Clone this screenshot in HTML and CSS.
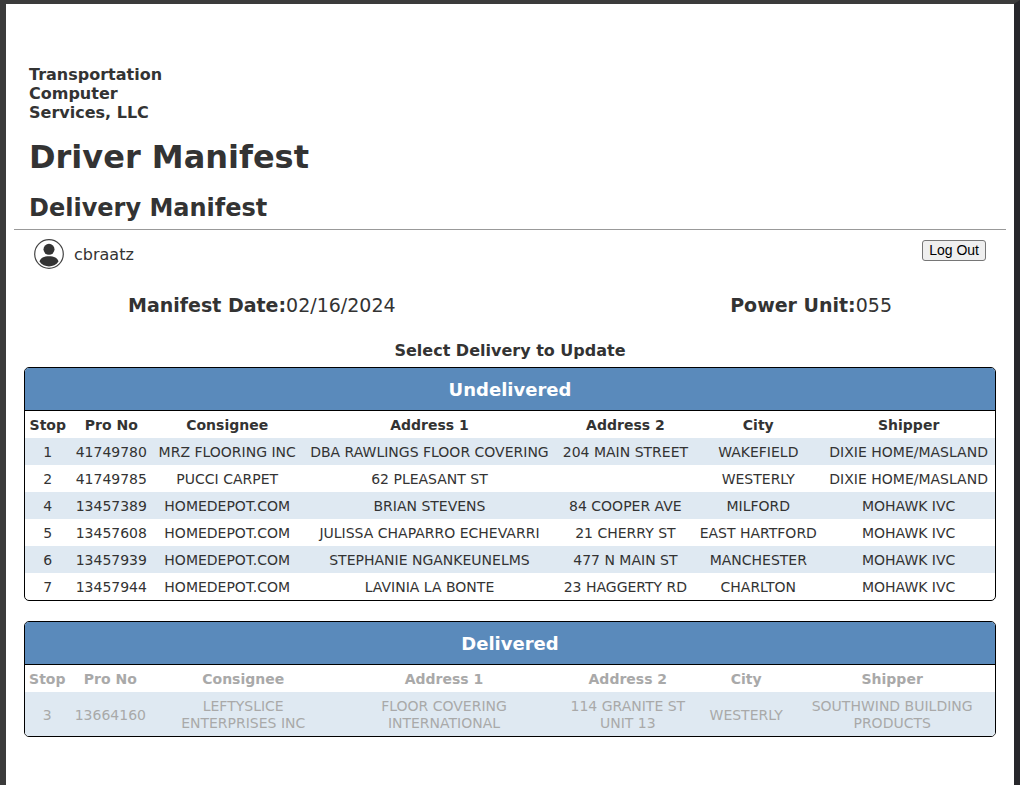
FILE: index.html
```html
<!DOCTYPE html>
<html lang="en">
<head>
<meta charset="utf-8">
<title>Driver Manifest</title>
<link rel="stylesheet" href="styles.css">
</head>
<body>
<div class="page">
  <header class="header">
    <p class="company">Transportation<br>Computer<br>Services, LLC</p>
    <h1 class="title">Driver Manifest</h1>
    <h2 class="subtitle">Delivery Manifest</h2>
  </header>
  <div class="userbar">
    <div class="user">
      <svg class="avatar" viewBox="0 0 30 30" aria-hidden="true">
        <circle cx="15" cy="15" r="14.3" fill="none" stroke="#444" stroke-width="1.2"/>
        <circle cx="15" cy="10.300" r="5.5" fill="#333"/>
        <path d="M5.500 22.6C6.300 18.700 10 17.200 15 17.200s8.700 1.500 9.500 5.400C22.300 25.900 18.700 27.400 15 27.400S7.700 25.900 5.500 22.600z" fill="#333"/>
      </svg>
      <span>cbraatz</span>
    </div>
    <button class="logout" type="button">Log Out</button>
  </div>
  <main>
    <div class="summary">
      <p class="fact"><b>Manifest Date:</b>02/16/2024</p>
      <p class="fact"><b>Power Unit:</b>055</p>
    </div>
    <h3 class="prompt">Select Delivery to Update</h3>
    <section class="panel">
      <h4 class="panel-title">Undelivered</h4>
      <table class="grid undelivered">
        <colgroup><col class="stop"><col class="pro"><col class="consignee"><col class="addr1"><col class="addr2"><col class="city"><col class="shipper"></colgroup>
        <thead><tr><th>Stop</th><th>Pro No</th><th>Consignee</th><th>Address 1</th><th>Address 2</th><th>City</th><th>Shipper</th></tr></thead>
        <tbody>
          <tr><td>1</td><td>41749780</td><td>MRZ FLOORING INC</td><td>DBA RAWLINGS FLOOR COVERING</td><td>204 MAIN STREET</td><td>WAKEFIELD</td><td>DIXIE HOME/MASLAND</td></tr>
          <tr><td>2</td><td>41749785</td><td>PUCCI CARPET</td><td>62 PLEASANT ST</td><td></td><td>WESTERLY</td><td>DIXIE HOME/MASLAND</td></tr>
          <tr><td>4</td><td>13457389</td><td>HOMEDEPOT.COM</td><td>BRIAN STEVENS</td><td>84 COOPER AVE</td><td>MILFORD</td><td>MOHAWK IVC</td></tr>
          <tr><td>5</td><td>13457608</td><td>HOMEDEPOT.COM</td><td>JULISSA CHAPARRO ECHEVARRI</td><td>21 CHERRY ST</td><td>EAST HARTFORD</td><td>MOHAWK IVC</td></tr>
          <tr><td>6</td><td>13457939</td><td>HOMEDEPOT.COM</td><td>STEPHANIE NGANKEUNELMS</td><td>477 N MAIN ST</td><td>MANCHESTER</td><td>MOHAWK IVC</td></tr>
          <tr><td>7</td><td>13457944</td><td>HOMEDEPOT.COM</td><td>LAVINIA LA BONTE</td><td>23 HAGGERTY RD</td><td>CHARLTON</td><td>MOHAWK IVC</td></tr>
        </tbody>
      </table>
    </section>
    <section class="panel">
      <h4 class="panel-title">Delivered</h4>
      <table class="grid delivered">
        <colgroup><col class="stop"><col class="pro"><col class="consignee"><col class="addr1"><col class="addr2"><col class="city"><col class="shipper"></colgroup>
        <thead><tr><th>Stop</th><th>Pro No</th><th>Consignee</th><th>Address 1</th><th>Address 2</th><th>City</th><th>Shipper</th></tr></thead>
        <tbody>
          <tr><td>3</td><td>13664160</td><td>LEFTYSLICE<br>ENTERPRISES INC</td><td>FLOOR COVERING<br>INTERNATIONAL</td><td>114 GRANITE ST<br>UNIT 13</td><td>WESTERLY</td><td>SOUTHWIND BUILDING<br>PRODUCTS</td></tr>
        </tbody>
      </table>
    </section>
  </main>
</div>
</body>
</html>
```
FILE: styles.css
```css
* {
  box-sizing: border-box;
}

body {
  margin: 0;
  min-height: 100vh;
  display: flex;
  border: solid #3b3b3b;
  border-width: 4px 6px 0;
  border-right-color: #27272b;
  background: #fff;
  color: #333;
  font: 16px/19px Verdana, "DejaVu Sans", sans-serif;
}

.page {
  flex: 1;
  min-width: 0;
  padding: 61px 8px 20px;
}

.header {
  padding: 0 15px 5px;
  border-bottom: 1px solid #999;
}

.company {
  margin: 0;
  font-weight: bold;
}

.title {
  margin: 16px 0 0;
  font-size: 32px;
  line-height: 38px;
}

.subtitle {
  margin: 16px 0 0;
  font-size: 24px;
  line-height: 32px;
}

.userbar {
  display: flex;
  justify-content: space-between;
  align-items: flex-start;
  padding: 9px 20px 0;
}

.user {
  display: flex;
  align-items: center;
  gap: 10px;
}

.avatar {
  width: 30px;
  height: 30px;
}

.logout {
  margin-top: 1px;
  padding: 1px 6px;
  border: 1px solid #767676;
  border-radius: 3px;
  background: #efefef;
  color: #000;
  font: 14px/17px "Liberation Sans", Arial, sans-serif;
}

.summary {
  display: flex;
  justify-content: space-between;
  padding: 24px 114px 0;
  font-size: 19px;
  line-height: 24px;
}

.fact {
  margin: 0;
}

.prompt {
  margin: 24px 0 7px;
  font-size: 16px;
  line-height: 19px;
  text-align: center;
}

.panel {
  margin: 0 10px 20px;
  overflow: hidden;
  border: 1px solid #000;
  border-radius: 5px;
}

.panel-title {
  margin: 0;
  padding: 11px 10px 9px;
  border-bottom: 1px solid #000;
  background: #5a8abb;
  color: #fff;
  font-size: 18px;
  line-height: 22px;
  text-align: center;
}

.grid {
  width: 100%;
  table-layout: fixed;
  border-collapse: collapse;
  font-size: 14px;
  line-height: 17px;
  text-align: center;
}

.grid th,
.grid td {
  padding: 6px 0 4px;
  white-space: nowrap;
}

.grid tbody tr:nth-child(odd) {
  background: #dfe9f2;
}

.undelivered .stop { width: 4.7%; }
.undelivered .pro { width: 8.4%; }
.undelivered .consignee { width: 15.5%; }
.undelivered .addr1 { width: 26.2%; }
.undelivered .addr2 { width: 14.2%; }
.undelivered .city { width: 13.2%; }
.undelivered .shipper { width: 17.8%; }

.delivered {
  color: #a9a9a9;
}

.delivered .stop { width: 4.6%; }
.delivered .pro { width: 8.4%; }
.delivered .consignee { width: 19%; }
.delivered .addr1 { width: 22.4%; }
.delivered .addr2 { width: 15.5%; }
.delivered .city { width: 8.9%; }
.delivered .shipper { width: 21.2%; }
```
